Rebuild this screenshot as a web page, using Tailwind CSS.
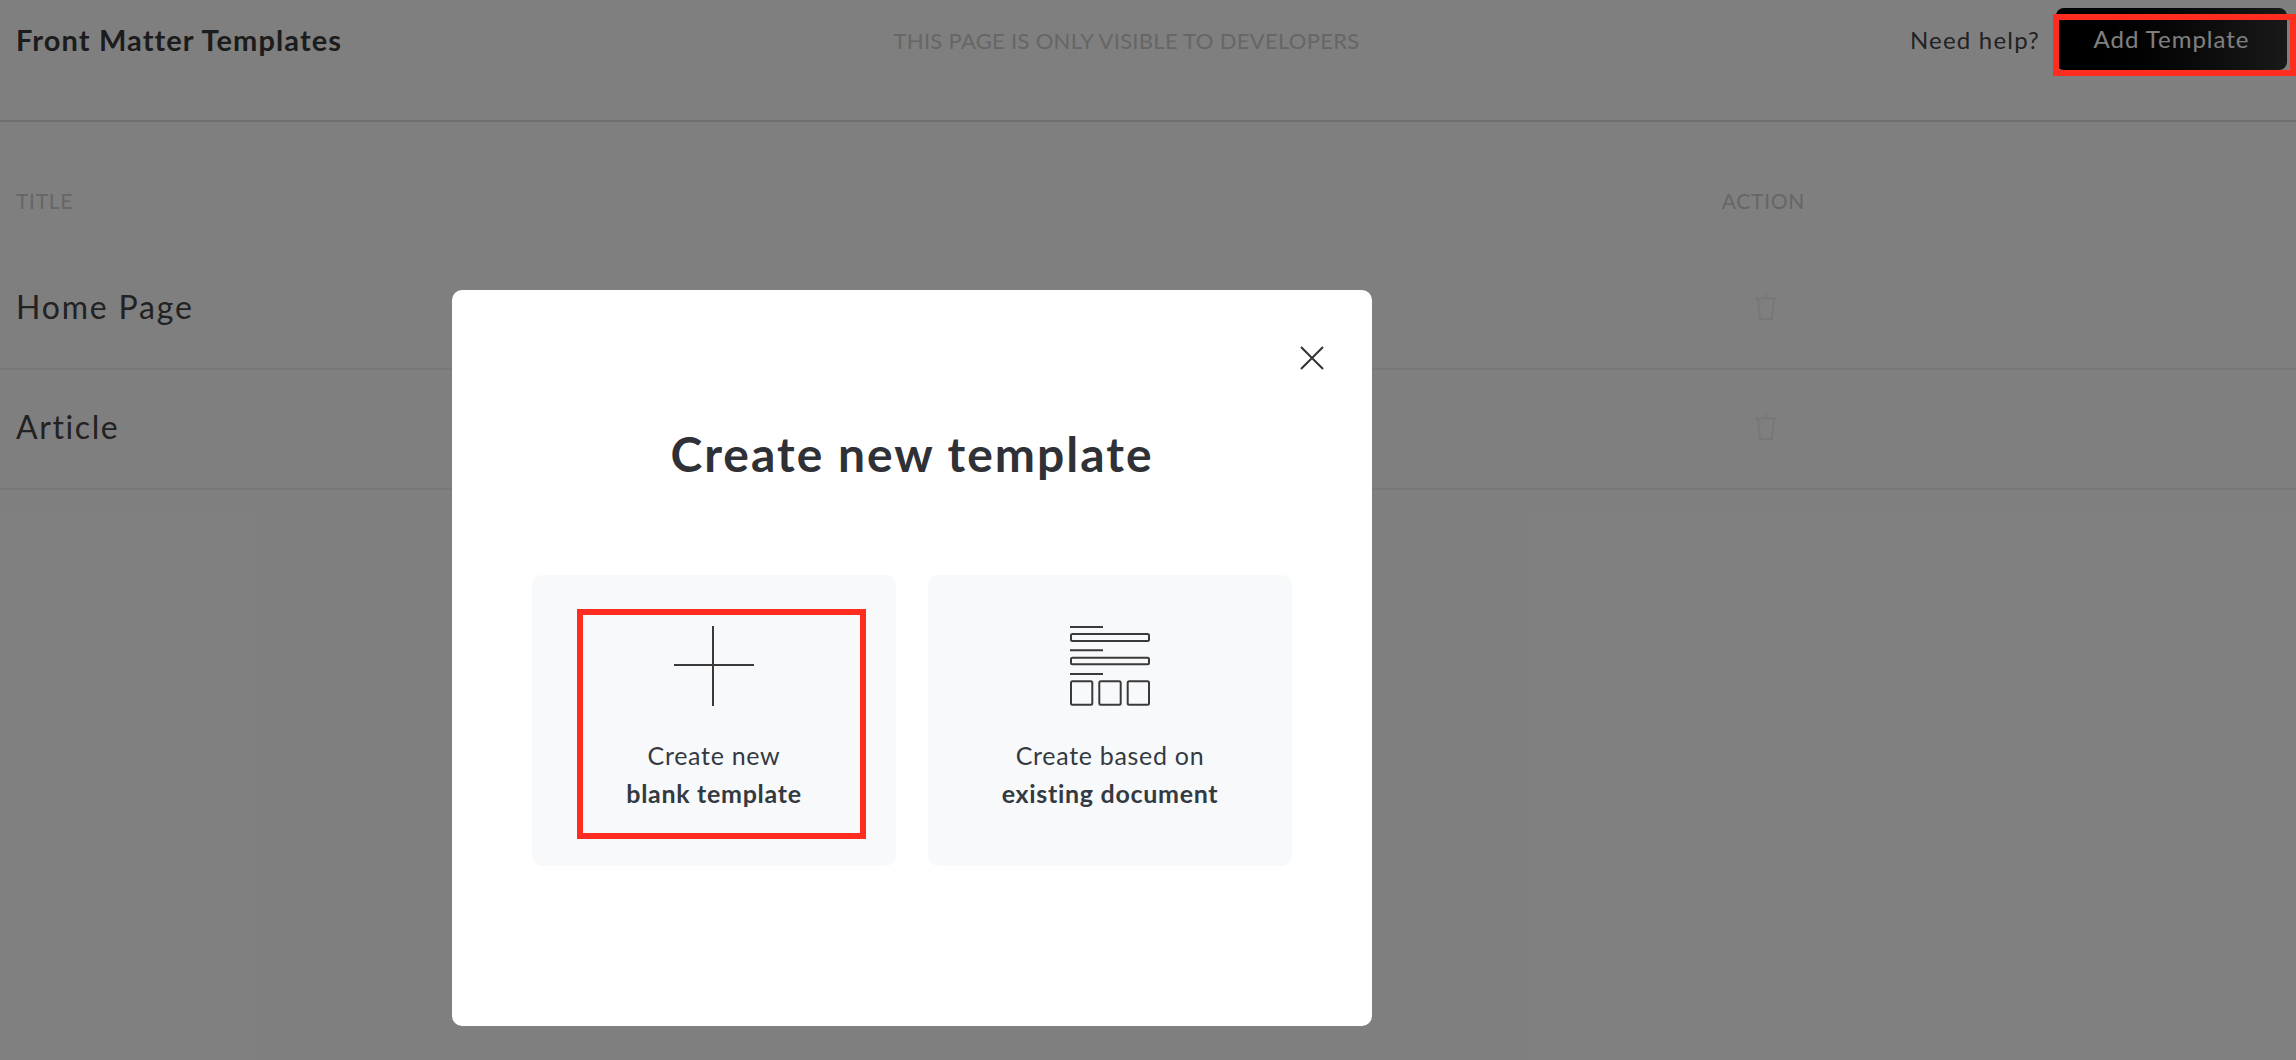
<!doctype html>
<html>
<head>
<meta charset="utf-8">
<script src="https://cdn.jsdelivr.net/npm/@tailwindcss/browser@4"></script>
</head>
<body class="bg-white font-['Lato',sans-serif]">
<div class="relative w-[2296px] h-[1060px] overflow-hidden bg-white">
  <header class="h-[122px] border-b-2 border-[#e0e0e0] pl-4 pr-[9px] pt-2 flex items-start justify-between">
    <h1 class="w-[550px] h-[64px] flex items-center text-[29px] font-bold tracking-[1.1px] text-[#383838]">Front Matter Templates</h1>
    <p class="h-[64px] flex items-center text-[22px] tracking-[0.3px] text-[#cccccc]">THIS PAGE IS ONLY VISIBLE TO DEVELOPERS</p>
    <div class="w-[600px] flex items-start justify-end gap-[16px]">
      <span class="h-[64px] flex items-center text-[24px] tracking-[1.2px] text-[#444444]">Need help?</span>
      <button class="w-[231px] h-[62px] rounded-lg bg-gradient-to-r from-[#000000] to-[#333333] text-[24px] tracking-[1px] text-white">Add Template</button>
    </div>
  </header>
  <div class="flex h-[126px] items-end pb-[32px] pl-4 pr-[491px] justify-between text-[21px] tracking-[0.7px] text-[#cccccc]">
    <span>TITLE</span><span>ACTION</span>
  </div>
  <div class="h-[120px] mt-[2px] pb-[5px] border-b-2 border-[#eeeeee] pl-4 pr-[518px] flex items-center justify-between">
    <span class="text-[32px] tracking-[1.8px] text-[#444444]">Home Page</span>
    <svg class="w-6 h-7" viewBox="0 0 24 28" fill="none" stroke="#eeeeee" stroke-width="2"><path d="M12 1v4M1 5.500h22M4 6l2 20h12l2-20"/></svg>
  </div>
  <div class="h-[120px] pb-[5px] border-b-2 border-[#eeeeee] pl-4 pr-[518px] flex items-center justify-between">
    <span class="text-[32px] tracking-[1.600px] text-[#444444]">Article</span>
    <svg class="w-6 h-7" viewBox="0 0 24 28" fill="none" stroke="#eeeeee" stroke-width="2"><path d="M12 1v4M1 5.500h22M4 6l2 20h12l2-20"/></svg>
  </div>

  <div class="absolute inset-0 bg-black/50 flex items-start justify-start">
    <div class="relative mt-[290px] ml-[452px] w-[920px] h-[736px] rounded-[10px] bg-white px-20 pt-[136px]">
      <svg class="absolute top-[56px] right-[48px] w-6 h-6" viewBox="0 0 24 24" fill="none" stroke="#333333" stroke-width="2"><path d="M1 1l22 22M23 1L1 23"/></svg>
      <h2 class="text-center text-[48px] leading-[56px] font-bold tracking-[2px] text-[#2f3136]">Create new template</h2>
      <div class="mt-[93px] grid grid-cols-2 gap-8">
        <div class="h-[291px] rounded-[10px] bg-[#f8f9fb] flex flex-col items-center pt-[51px] text-[#343a42] text-[25px] leading-[38px] tracking-[0.7px]">
          <svg class="w-20 h-20" viewBox="0 0 80 80" fill="none" stroke="#3a3a3a" stroke-width="2"><path d="M39 0v80M0 39h80"/></svg>
          <p class="mt-[30px] text-center">Create new<br><strong class="font-bold">blank template</strong></p>
        </div>
        <div class="h-[291px] rounded-[10px] bg-[#f8f9fb] flex flex-col items-center pt-[51px] text-[#343a42] text-[25px] leading-[38px] tracking-[0.7px]">
          <svg class="w-20 h-20" viewBox="0 0 80 80" fill="none" stroke="#3a3a3a" stroke-width="2">
            <path d="M0 1h33M0 24.300h33M0 48h33"/>
            <rect x="1" y="8" width="78" height="7" rx="1.500"/>
            <rect x="1" y="31.700" width="78" height="6.600" rx="1.500"/>
            <rect x="1" y="55.300" width="21.300" height="23.400" rx="1.500"/>
            <rect x="29.300" y="55.300" width="21.400" height="23.400" rx="1.500"/>
            <rect x="57.700" y="55.300" width="21.300" height="23.400" rx="1.500"/>
          </svg>
          <p class="mt-[30px] text-center">Create based on<br><strong class="font-bold">existing document</strong></p>
        </div>
      </div>
    </div>
  </div>

  <div class="absolute left-[2053px] top-[14px] w-[243px] h-[62px] border-[6px] border-[#ff2d1f]"></div>
  <div class="absolute left-[577px] top-[609px] w-[289px] h-[230px] border-[6px] border-[#ff2d1f]"></div>
</div>
</body>
</html>
